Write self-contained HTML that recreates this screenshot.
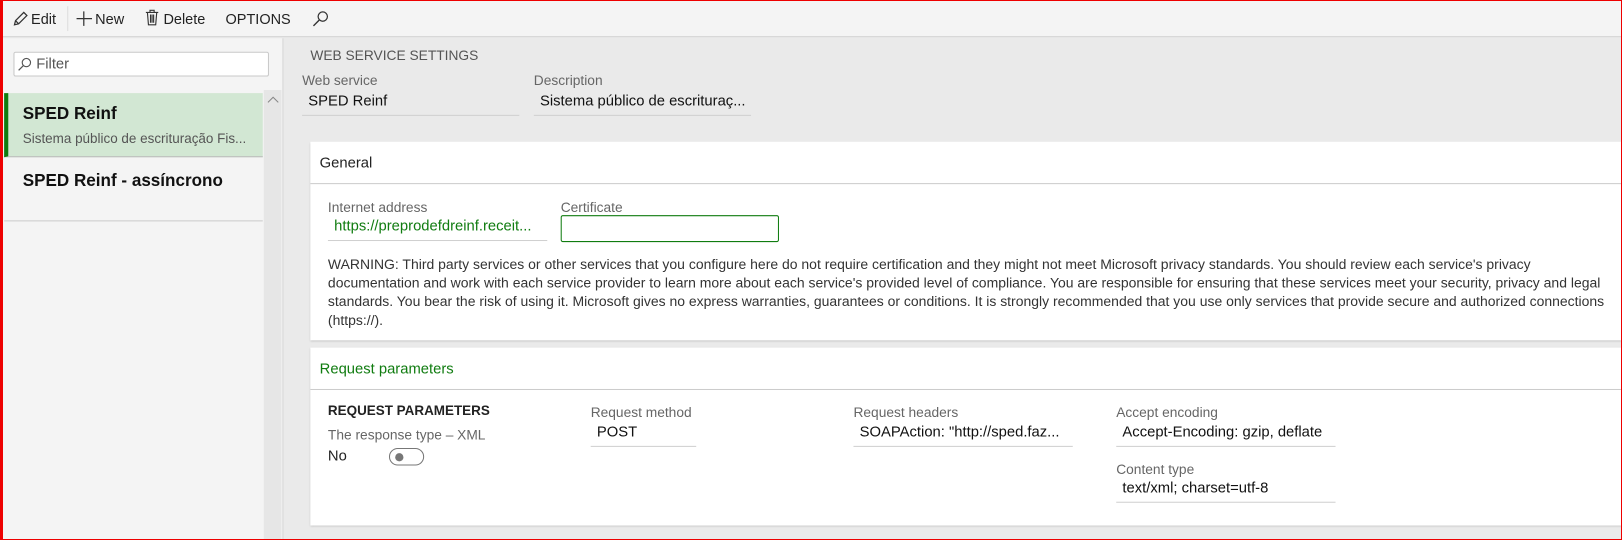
<!DOCTYPE html>
<html style="overflow:hidden;width:1622px;height:540px"><head><meta charset="utf-8"><style>
*{box-sizing:border-box;margin:0;padding:0}
body{width:1622px;height:540px;overflow:hidden;font-family:"Liberation Sans",sans-serif;background:#eaeaea;position:relative;color:#222}
.abs{position:absolute}
#clip{position:absolute;left:0;top:0;width:1622px;height:540px;overflow:hidden}
#wrap{position:absolute;left:0;top:0;width:1568px;height:522px;transform:scale(1.0345);transform-origin:0 0}
#frame{position:absolute;left:0;top:0;width:1622px;height:540px;border:1px solid #e00;border-left:3px solid #e00;pointer-events:none;z-index:10}
#tb{left:0;top:0;width:1568px;height:36px;background:#f4f4f4;border-bottom:1px solid #d0d0d0;font-size:14px;color:#222}
#tb span{position:absolute;top:10px}
#left{left:0;top:37px;width:274px;height:485px;background:#f4f4f4;border-right:1px solid #d6d6d6}
.lbl{font-size:13.3px;color:#666;position:absolute}
.val{font-size:14.3px;color:#111;position:absolute;border-bottom:1px solid #d0d0d0;height:26px;padding:4px 0 0 6px;white-space:nowrap}
.card{position:absolute;left:300px;width:1268px;background:#fff;box-shadow:0 1px 2px #bbb}
.hdr{height:41px;border-bottom:1px solid #ccc;font-size:14.3px;padding:13px 0 0 9px}
.warn{position:absolute;left:17px;top:110px;font-size:13.5px;line-height:18px;color:#333;white-space:nowrap}
</style></head><body>
<div id="clip">
<div id="wrap">
<div id="tb" class="abs">
<svg class="abs" style="left:12px;top:10px" width="16" height="16" viewBox="0 0 16 16"><path d="M2 14l1-4 8-8 3 3-8 8z M3 10l3 3" fill="none" stroke="#333" stroke-width="1.2"/></svg>
<span style="left:30px">Edit</span>
<div class="abs" style="left:65px;top:6px;width:1px;height:24px;background:#ddd"></div>
<svg class="abs" style="left:73px;top:10px" width="16" height="16"><path d="M8 1v14M1 8h15" stroke="#333" stroke-width="1.2"/></svg>
<span style="left:92px">New</span>
<svg class="abs" style="left:140px;top:9px" width="14" height="16"><path d="M1 3h12M5 3V1h4v2M2.5 3l1 12h7l1-12M5.5 5v8M7 5v8M8.5 5v8" fill="none" stroke="#333" stroke-width="1.1"/></svg>
<span style="left:158px">Delete</span>
<span style="left:218px">OPTIONS</span>
<svg class="abs" style="left:302px;top:10px" width="16" height="16"><circle cx="10" cy="6" r="4.5" fill="none" stroke="#333" stroke-width="1.2"/><path d="M7 9l-6 6" stroke="#333" stroke-width="1.3"/></svg>
</div>
<div id="left" class="abs">
<div class="abs" style="left:13px;top:13px;width:247px;height:24px;background:#fff;border:1px solid #c8c8c8;border-radius:2px"></div>
<svg class="abs" style="left:17px;top:18px" width="14" height="14"><circle cx="8.5" cy="5.5" r="4" fill="none" stroke="#555" stroke-width="1.1"/><path d="M6 8l-5 5" stroke="#555" stroke-width="1.2"/></svg>
<div class="abs" style="left:35px;top:17px;font-size:14.3px;color:#555">Filter</div>
<div class="abs" style="left:4px;top:53px;width:250px;height:62px;background:#d2e7d3;border-left:4px solid #107c10;border-bottom:1px solid #bbb"></div>
<div class="abs" style="left:22px;top:64px;font-size:16.5px;font-weight:bold;color:#111">SPED Reinf</div>
<div class="abs" style="left:22px;top:89px;font-size:13px;color:#555">Sistema público de escrituração Fis...</div>
<div class="abs" style="left:4px;top:115px;width:250px;height:62px;border-bottom:1px solid #ccc"></div>
<div class="abs" style="left:22px;top:129px;font-size:16.5px;font-weight:bold;color:#111">SPED Reinf - assíncrono</div>
<div class="abs" style="left:255px;top:50px;width:17px;height:435px;background:#e6e6e6"></div>
<svg class="abs" style="left:258px;top:56px" width="12" height="8"><path d="M1 6l5-5 5 5" fill="none" stroke="#888"/></svg>
</div>
<div class="abs" style="left:300px;top:46px;font-size:13.3px;color:#555">WEB SERVICE SETTINGS</div>
<div class="lbl" style="left:292px;top:70px">Web service</div>
<div class="val" style="left:292px;top:86px;width:210px">SPED Reinf</div>
<div class="lbl" style="left:516px;top:70px">Description</div>
<div class="val" style="left:516px;top:86px;width:210px">Sistema público de escrituraç...</div>

<div class="card" style="top:137px;height:192px">
<div class="hdr">General</div>
<div class="lbl" style="left:17px;top:56px">Internet address</div>
<div class="val" style="left:17px;top:70px;width:212px;color:#107c10">https://preprodefdreinf.receit...</div>
<div class="lbl" style="left:242px;top:56px">Certificate</div>
<div class="abs" style="left:242px;top:71px;width:211px;height:26px;border:1px solid #107c10;border-radius:2px"></div>
<div class="warn">WARNING: Third party services or other services that you configure here do not require certification and they might not meet Microsoft privacy standards. You should review each service's privacy<br>documentation and work with each service provider to learn more about each service's provided level of compliance. You are responsible for ensuring that these services meet your security, privacy and legal<br>standards. You bear the risk of using it. Microsoft gives no express warranties, guarantees or conditions. It is strongly recommended that you use only services that provide secure and authorized connections<br>(https://).</div>
</div>

<div class="card" style="top:336px;height:172px">
<div class="hdr" style="color:#107c10">Request parameters</div>
<div class="abs" style="left:17px;top:53px;font-size:13px;font-weight:bold;color:#222">REQUEST PARAMETERS</div>
<div class="lbl" style="left:17px;top:77px">The response type – XML</div>
<div class="abs" style="left:17px;top:97px;font-size:14.3px">No</div>
<div class="abs" style="left:76px;top:97px;width:34px;height:17px;border:1px solid #777;border-radius:9px"></div>
<div class="abs" style="left:82px;top:102px;width:8px;height:8px;border-radius:4px;background:#777"></div>
<div class="lbl" style="left:271px;top:55px">Request method</div>
<div class="val" style="left:271px;top:70px;width:102px">POST</div>
<div class="lbl" style="left:525px;top:55px">Request headers</div>
<div class="val" style="left:525px;top:70px;width:212px">SOAPAction: "http://sped.faz...</div>
<div class="lbl" style="left:779px;top:55px">Accept encoding</div>
<div class="val" style="left:779px;top:70px;width:212px">Accept-Encoding: gzip, deflate</div>
<div class="lbl" style="left:779px;top:110px">Content type</div>
<div class="val" style="left:779px;top:124px;width:212px">text/xml; charset=utf-8</div>
</div>
</div>
<div id="frame"></div>
</div>
</body></html>
